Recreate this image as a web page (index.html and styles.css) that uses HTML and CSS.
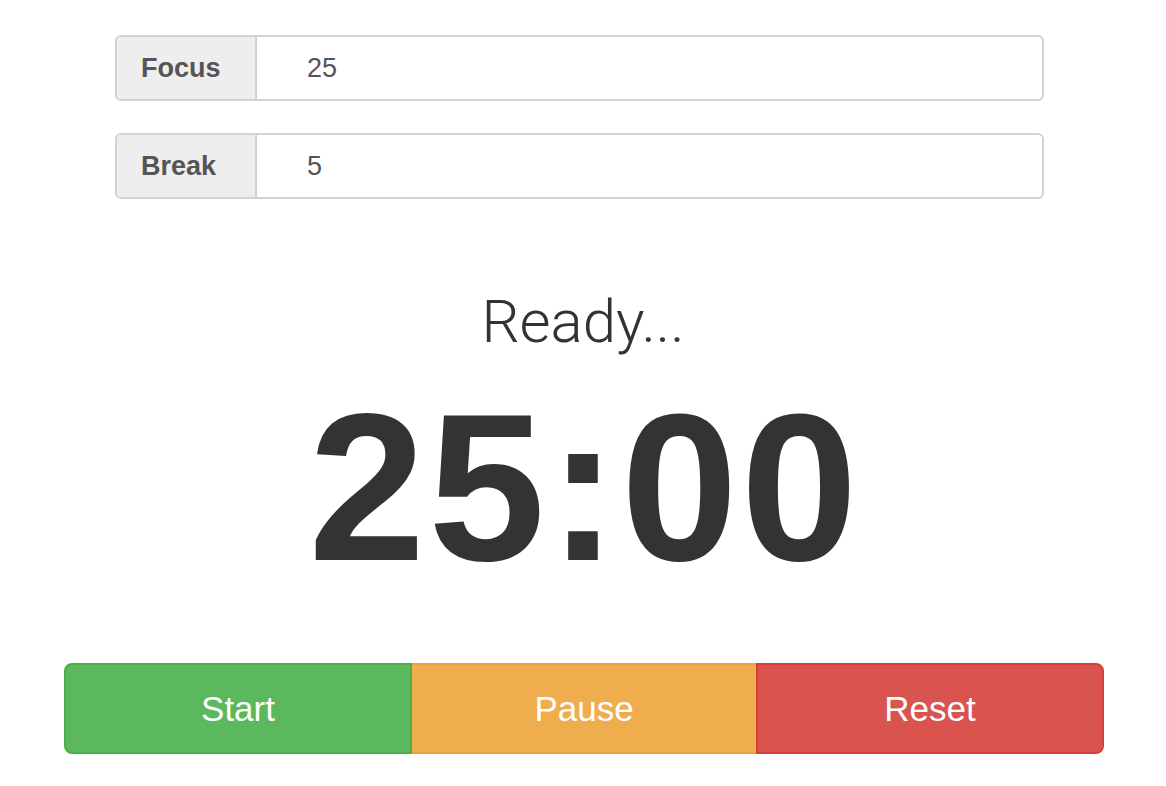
FILE: index.html
```html
<!DOCTYPE html>
<html>
<head>
<meta charset="utf-8">
<link rel="stylesheet" href="styles.css">
</head>
<body>
<div class="page">
  <div class="settings">
    <div class="input-group">
      <span class="addon">Focus</span>
      <span class="field">25</span>
    </div>
    <div class="input-group">
      <span class="addon">Break</span>
      <span class="field">5</span>
    </div>
  </div>
  <div class="status">Ready...</div>
  <div class="clock">25:00</div>
  <div class="controls">
    <button class="btn btn-start">Start</button>
    <button class="btn btn-pause">Pause</button>
    <button class="btn btn-reset">Reset</button>
  </div>
</div>
</body>
</html>
```
FILE: styles.css
```css
html, body {
  margin: 0;
  padding: 0;
  background: #fff;
}
body {
  font-family: "Liberation Sans", Arial, sans-serif;
  color: #333;
}
.page {
  display: flex;
  flex-direction: column;
  padding-top: 35px;
}
.settings {
  display: flex;
  flex-direction: column;
  gap: 32px;
  width: 929px;
  margin-left: 115px;
}
.input-group {
  display: flex;
  height: 66px;
  box-sizing: border-box;
  border: 2px solid #d2d2d2;
  border-radius: 6px;
  overflow: hidden;
}
.addon {
  width: 140px;
  flex: none;
  background: #eeeeee;
  border-right: 2px solid #d2d2d2;
  display: flex;
  align-items: center;
  padding-left: 24px;
  box-sizing: border-box;
  font-weight: bold;
  font-size: 27px;
  color: #555;
}
.field {
  flex: 1;
  display: flex;
  align-items: center;
  padding-left: 50px;
  font-size: 27px;
  color: #555;
}
.status {
  margin-top: 88px;
  text-align: center;
  font-family: Roboto, "Liberation Sans", sans-serif;
  font-weight: 300;
  font-size: 60px;
  line-height: 70px;
  color: #333;
}
.clock {
  margin-top: 21px;
  text-align: center;
  font-weight: bold;
  font-size: 210px;
  line-height: 220px;
  letter-spacing: 3px;
  text-indent: 3px;
  color: #333;
}
.controls {
  display: flex;
  width: 1040px;
  margin-left: 64px;
  margin-top: 65px;
  height: 91px;
}
.btn {
  flex: 1;
  border: 2px solid;
  font-family: "Liberation Sans", Arial, sans-serif;
  font-size: 35px;
  color: #fff;
  padding: 0;
  margin: 0;
}
.btn-start {
  background: #5cb85c;
  border-color: #4cae4c;
  border-radius: 8px 0 0 8px;
}
.btn-pause {
  background: #f0ad4e;
  border-color: #eea236;
  border-left: none;
  border-right: none;
}
.btn-reset {
  background: #d9534f;
  border-color: #d43f3a;
  border-radius: 0 8px 8px 0;
}
```
